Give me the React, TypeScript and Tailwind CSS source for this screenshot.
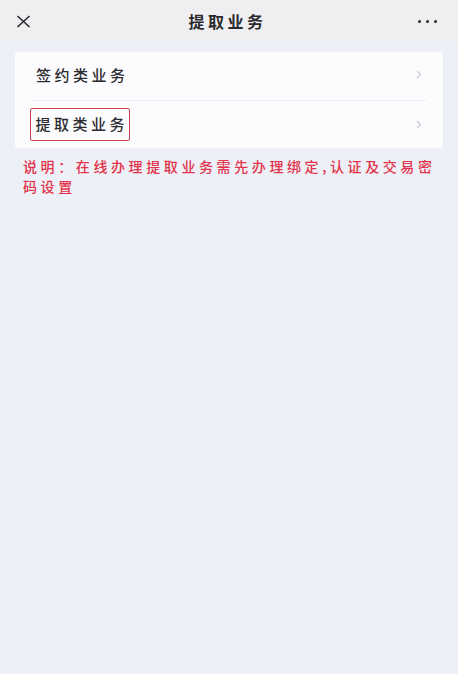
const font = "font-['Noto_Sans_CJK_SC','Noto_Sans',sans-serif]";

function Chevron() {
  return (
    <svg width="6" height="9" viewBox="0 0 6 9" fill="none" className="mr-[21px]">
      <path d="M1 1l3.5 3.5L1 8" stroke="#c9c9ce" strokeWidth="1.2" />
    </svg>
  );
}

export default function App() {
  return (
    <div className={`${font} w-[458px] h-[674px] bg-[#eef0f7] flex flex-col`}>
      {/* top bar */}
      <div className="h-[42px] bg-[#efeff1] flex items-center justify-between px-[16px]">
        <svg width="15" height="13" viewBox="0 0 15 13" fill="none">
          <path d="M1.5 1l12 11M13.5 1l-12 11" stroke="#2a2a2e" strokeWidth="1.6" />
        </svg>
        <h1 className="text-[16px] font-bold tracking-[3.5px] text-[#2a2a2e] pl-[6px]">提取业务</h1>
        <div className="flex gap-[5px] pr-[5px]">
          <span className="size-[3px] rounded-full bg-[#2a2a2e]" />
          <span className="size-[3px] rounded-full bg-[#2a2a2e]" />
          <span className="size-[3px] rounded-full bg-[#2a2a2e]" />
        </div>
      </div>

      {/* list card */}
      <div className="mt-[10px] mx-[15px] w-[428px] bg-[#fcfcfe] rounded-[3px] flex flex-col">
        <div className="h-[48px] flex items-center justify-between pl-[21px] pb-[3px]">
          <span className="text-[15px] font-medium tracking-[3.5px] text-[#2b2b2f] leading-none">签约类业务</span>
          <Chevron />
        </div>
        <div className="mx-[17px] h-px bg-[#ececf0]" />
        <div className="h-[47px] flex items-center justify-between pl-[15px] pb-[1px]">
          <span className="h-[33px] flex items-center border-[1.5px] border-[#c9424f] rounded-[2px] pl-[4.5px] pr-[1px] pb-[2px] text-[15px] font-medium tracking-[3.5px] text-[#2b2b2f] leading-none">
            提取类业务
          </span>
          <Chevron />
        </div>
      </div>

      {/* note */}
      <p className="mt-[8px] pl-[23px] pr-[15px] text-[14px] font-medium leading-[20px] tracking-[3.6px] text-[#e2344a]">
        说明：在线办理提取业务需先办理绑定,认证及交易密码设置
      </p>
    </div>
  );
}
